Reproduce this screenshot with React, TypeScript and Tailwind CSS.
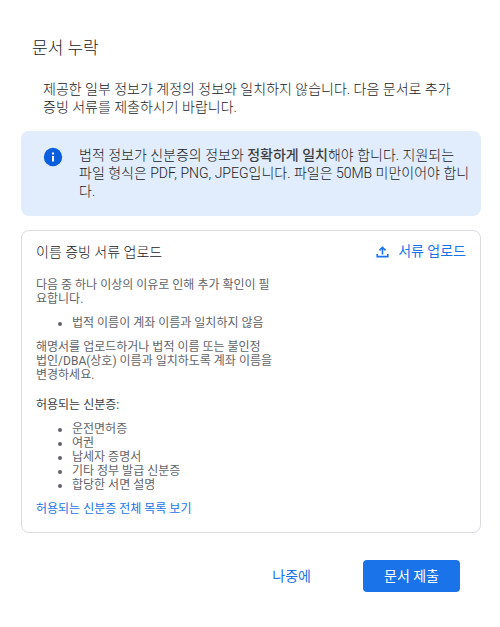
import React from 'react';

const acceptedIds = [
  '운전면허증',
  '여권',
  '납세자 증명서',
  '기타 정부 발급 신분증',
  '합당한 서면 설명',
];

const InfoIcon = () => (
  <svg className="w-5 h-5 shrink-0 mt-px" viewBox="0 0 20 20" aria-hidden="true">
    <circle cx="10" cy="10" r="9.2" fill="#0b5fde" />
    <rect x="9" y="9" width="2" height="5.5" fill="#fff" />
    <rect x="9" y="5.5" width="2" height="2" fill="#fff" />
  </svg>
);

const UploadIcon = () => (
  <svg className="w-4 h-4" viewBox="0 0 16 16" fill="none" stroke="currentColor" strokeWidth="1.6" aria-hidden="true">
    <path d="M8.5 11.5V5" />
    <path d="M5.5 7.4l3-3 3 3" />
    <path d="M3.2 11v2.6h10.6V11" />
  </svg>
);

const App = () => {
  return (
    <div className="bg-white pl-[21px] pr-[19px] pt-9 pb-9 text-sm leading-[18px] font-light text-[#202124] font-[Roboto,'Noto_Sans_CJK_KR',sans-serif]">
      <header className="px-[11px]">
        <h1 className="text-[17px] leading-6">문서 누락</h1>
        <p className="mt-5 px-[11px]">
          제공한 일부 정보가 계정의 정보와 일치하지 않습니다. 다음 문서로 추가 증빙 서류를 제출하시기 바랍니다.
        </p>
      </header>

      <section className="mt-[15px] flex gap-4 rounded-lg bg-[#e1edfc] pt-[15px] pb-4 pl-[22px] pr-1">
        <InfoIcon />
        <p className="break-all">
          법적 정보가 신분증의 정보와 <b className="font-medium text-[#3c4043]">정확하게 일치</b>해야 합니다. 지원되는
          <br />
          파일 형식은 PDF, PNG, JPEG입니다. 파일은 50MB 미만이어야 합니다.
        </p>
      </section>

      <section className="mt-[14px] rounded-lg border border-[#dadce0] px-[14px] pt-[11px] pb-4">
        <div className="flex items-start justify-between">
          <h2 className="mt-px">이름 증빙 서류 업로드</h2>
          <button className="flex items-center gap-2 font-normal text-[#1a73e8]">
            <UploadIcon />
            서류 업로드
          </button>
        </div>

        <div className="mt-[17px] w-60 text-xs leading-[14px] font-normal text-[#5f6368]">
          <p className="break-all">다음 중 하나 이상의 이유로 인해 추가 확인이 필요합니다.</p>
          <ul className="my-[10px] list-disc pl-9">
            <li>법적 이름이 계좌 이름과 일치하지 않음</li>
          </ul>
          <p className="break-keep">해명서를 업로드하거나 법적 이름 또는 불인정 법인/DBA(상호) 이름과 일치하도록 계좌 이름을 변경하세요.</p>
          <h3 className="mt-4 text-[#3c4043]">허용되는 신분증:</h3>
          <ul className="my-[10px] list-disc pl-9">
            {acceptedIds.map((id) => (
              <li key={id}>{id}</li>
            ))}
          </ul>
          <a href="#" className="text-[#1a73e8]">허용되는 신분증 전체 목록 보기</a>
        </div>
      </section>

      <footer className="mt-[27px] flex items-center justify-end gap-8 pr-[21px]">
        <button className="px-5 py-[7px] font-normal text-[#1a73e8]">나중에</button>
        <button className="h-8 rounded bg-[#1a73e8] px-[21px] font-normal text-white">문서 제출</button>
      </footer>
    </div>
  );
};

export default App;
